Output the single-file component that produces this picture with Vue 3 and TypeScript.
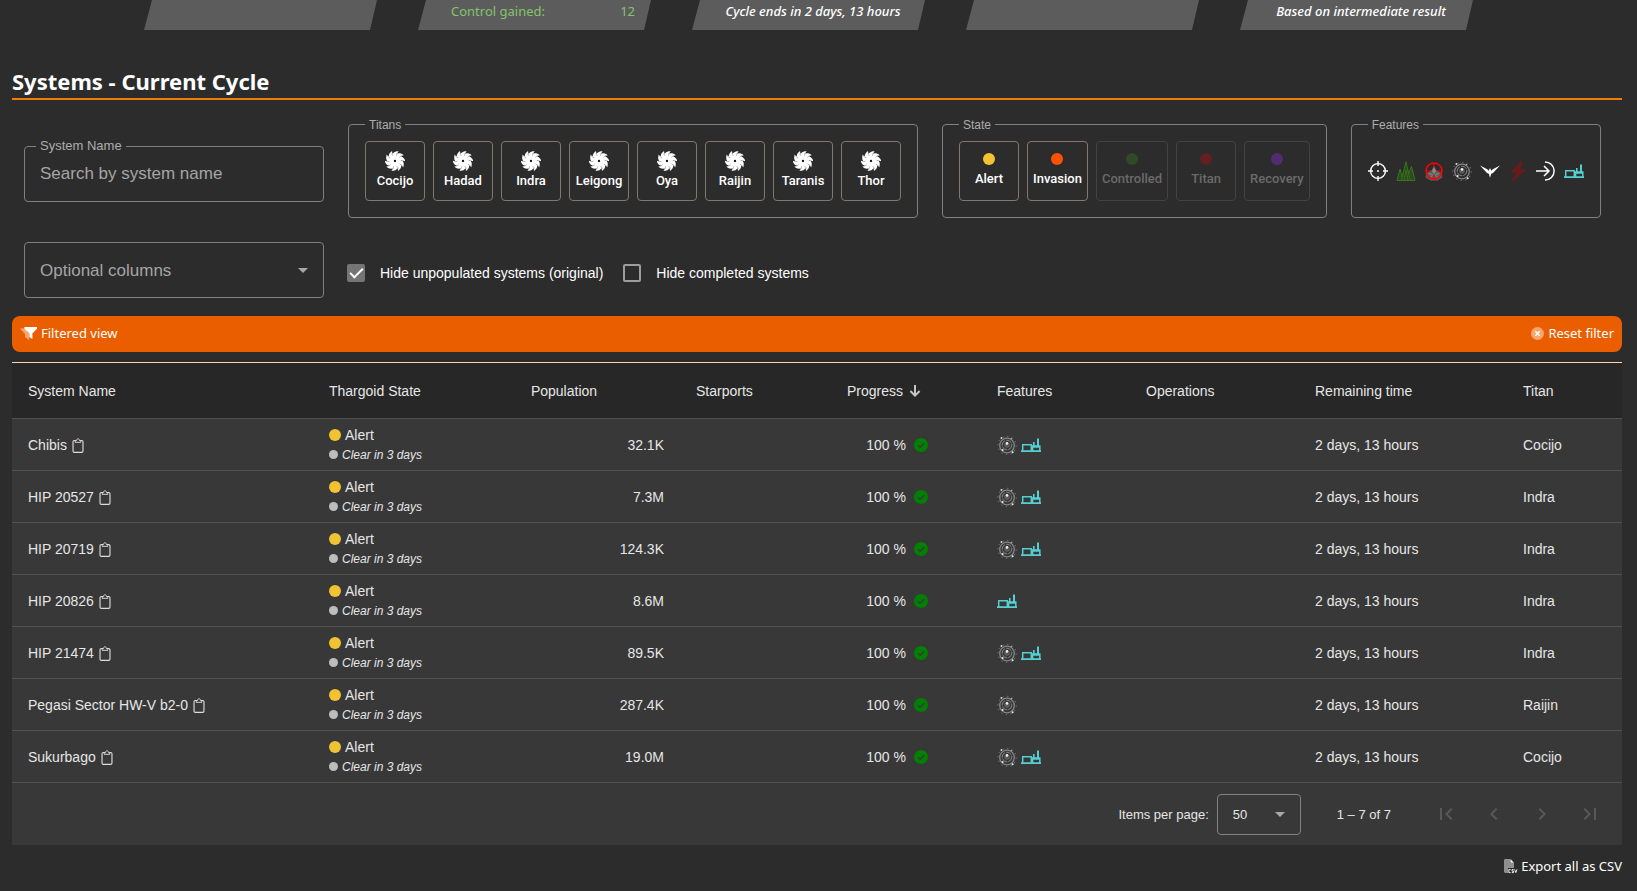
<script setup lang="ts">
import { ref } from 'vue'

interface Toggle {
  name: string
  active: boolean
  color?: string
}

interface Feature {
  id: string
  label: string
  active: boolean
}

interface SystemRow {
  name: string
  population: string
  features: string[]
  titan: string
}

const search = ref('')
const hideUnpopulated = ref(true)
const hideCompleted = ref(false)
const pageSize = ref(50)
const optionalColumn = ref('')

const titans = ref<Toggle[]>(
  ['Cocijo', 'Hadad', 'Indra', 'Leigong', 'Oya', 'Raijin', 'Taranis', 'Thor'].map((name) => ({ name, active: true })),
)

const states = ref<Toggle[]>([
  { name: 'Alert', active: true, color: '#f1c232' },
  { name: 'Invasion', active: true, color: '#ff5200' },
  { name: 'Controlled', active: false, color: '#38761d' },
  { name: 'Titan', active: false, color: '#b80c0c' },
  { name: 'Recovery', active: false, color: '#8e2bdc' },
])

const features = ref<Feature[]>([
  { id: 'target', label: 'Ground port attack', active: true },
  { id: 'spikes', label: 'Barnacle matrix', active: false },
  { id: 'spire', label: 'Thargoid spires', active: true },
  { id: 'ring', label: 'Asteroid belt', active: true },
  { id: 'wings', label: 'Federal faction', active: true },
  { id: 'bolt', label: 'Counterstrike', active: false },
  { id: 'arrow', label: 'Reactivation', active: true },
  { id: 'port', label: 'Odyssey settlements', active: true },
])

const systems: SystemRow[] = [
  { name: 'Chibis', population: '32.1K', features: ['ring', 'port'], titan: 'Cocijo' },
  { name: 'HIP 20527', population: '7.3M', features: ['ring', 'port'], titan: 'Indra' },
  { name: 'HIP 20719', population: '124.3K', features: ['ring', 'port'], titan: 'Indra' },
  { name: 'HIP 20826', population: '8.6M', features: ['port'], titan: 'Indra' },
  { name: 'HIP 21474', population: '89.5K', features: ['ring', 'port'], titan: 'Indra' },
  { name: 'Pegasi Sector HW-V b2-0', population: '287.4K', features: ['ring'], titan: 'Raijin' },
  { name: 'Sukurbago', population: '19.0M', features: ['ring', 'port'], titan: 'Cocijo' },
]

const blades = [0, 36, 72, 108, 144, 180, 216, 252, 288, 324]

const pagerButtons = [
  { label: 'First page', path: 'M18.41 16.59L13.82 12l4.59-4.59L17 6l-6 6 6 6zM6 6h2v12H6z' },
  { label: 'Previous page', path: 'M15.41 7.41L14 6l-6 6 6 6 1.41-1.41L10.83 12z' },
  { label: 'Next page', path: 'M10 6L8.59 7.41 13.17 12l-4.58 4.59L10 18l6-6z' },
  { label: 'Last page', path: 'M5.59 7.41L10.18 12l-4.59 4.59L7 18l6-6-6-6zM16 6h2v12h-2z' },
]
</script>

<template>
  <svg class="sprite" aria-hidden="true">
    <symbol id="titan" viewBox="-12 -12 24 24">
      <circle r="8.6" fill="currentColor" />
      <path
        v-for="angle in blades"
        :key="angle"
        :transform="`rotate(${angle})`"
        d="M-4 -5 C-4 -9 -1 -12 4.4 -11.8 C3 -10.6 2.6 -9.4 3.2 -6 Z"
        fill="currentColor"
      />
      <path
        v-for="angle in blades"
        :key="'l' + angle"
        :transform="`rotate(${angle})`"
        d="M1.8 -6.6 C1.6 -7.8 2 -9 2.8 -10"
        fill="none"
        stroke="#2c2c2c"
        stroke-width="0.4"
      />
      <circle r="1.4" fill="#111" />
    </symbol>
    <symbol id="target" viewBox="0 0 20 20">
      <circle cx="10" cy="10" r="7.4" fill="none" stroke="#fff" stroke-width="1.4" />
      <path d="M10 0v5M10 15v5M0 10h5M15 10h5" stroke="#fff" stroke-width="1.4" />
      <circle cx="10" cy="10" r="1" fill="#fff" />
    </symbol>
    <symbol id="spikes" viewBox="0 0 20 20">
      <path d="M1 19.5L4 8l2.2 8L10 .8l2.6 12L15.5 5.5 19 19.5z" fill="#2c4a1f" stroke="#38761d" stroke-width="1" />
      <path d="M6.2 16L5.4 19.5M12.6 12.8l2 6.7M8 19l2-10 2 10" fill="none" stroke="#38761d" stroke-width="0.8" />
    </symbol>
    <symbol id="spire" viewBox="0 0 20 20">
      <path d="M10 5l2.6 4.5 5 2.5.8 4.4-4.9 3.2h-7L1.6 16.4l.8-4.4 5-2.5z" fill="#5e5e5e" />
      <circle cx="10" cy="10" r="8" fill="none" stroke="#f00" stroke-width="1.5" />
      <path d="M10 2v6M2 10h5M13 10h5M10 14v4" stroke="#f00" stroke-width="1.1" />
      <path d="M10 6l2 4-2 3-2-3z" fill="#8a8a8a" />
      <path d="M5 12.5l3.4 1M15 12.5l-3.4 1M6.6 16l2-1.6M13.4 16l-2-1.6" stroke="#8f8f8f" stroke-width="0.9" />
    </symbol>
    <symbol id="ring" viewBox="0 0 20 20">
      <circle cx="10" cy="10.5" r="7.3" fill="none" stroke="#858585" stroke-width="1.3" />
      <circle cx="10" cy="10.5" r="9.2" fill="none" stroke="#8e8e8e" stroke-width="0.9" stroke-dasharray="1.2 3.6" />
      <circle cx="10" cy="10" r="4.8" fill="none" stroke="#848484" stroke-width="1" stroke-dasharray="6 1" />
      <circle cx="10" cy="10" r="2.8" fill="#5c5c5c" />
      <circle cx="10" cy="8.4" r="1.3" fill="#eee" />
      <circle cx="4.4" cy="3" r="0.9" fill="#ddd" />
      <circle cx="5.6" cy="15" r="1" fill="#eee" />
      <circle cx="15.6" cy="17.2" r="1" fill="#eee" />
      <circle cx="14.4" cy="3.6" r="0.7" fill="#bbb" />
    </symbol>
    <symbol id="wings" viewBox="0 0 20 20">
      <path d="M0 4.6l7.2 3.6 1.6 1.6.8-2.2h.8l.8 2.2 1.6-1.6L20 4.6l-7 7.4-1.8.8L10 16.8l-1.2-4-1.8-.8z" fill="#fff" />
    </symbol>
    <symbol id="bolt" viewBox="0 0 20 20">
      <path d="M13 0L2.8 10.4l.2 1.4h5.2L4 19.2l1.2.8L17.4 9.6l-.2-1.4h-5L15.2.8z" fill="#661c1c" />
    </symbol>
    <symbol id="arrow" viewBox="0 0 20 20">
      <path d="M9 .9a9.1 9.1 0 1 1 0 18.2M0 10h13M8 5l5 5-5 5" fill="none" stroke="#fff" stroke-width="1.5" />
    </symbol>
    <symbol id="port" viewBox="0 0 20 20">
      <path d="M1.7 16V9.7h8.6V16M11.6 16v-5h7.2v5M11.6 12h7" fill="none" stroke="#55cfd2" stroke-width="1.5" />
      <path d="M16 3.4h2V11h-2zM12 7h1.6v4H12zM0 15.2h20V17H0z" fill="#55cfd2" />
    </symbol>
    <symbol id="clipboard" viewBox="0 0 12 16">
      <rect x="0.7" y="2.7" width="10.6" height="12.6" rx="1.4" fill="none" stroke="#ddd" stroke-width="1.2" />
      <path d="M3 4.6V2.8h1.2C4.6.2 7.4.2 7.8 2.8H9v1.8z" fill="#383838" stroke="#ddd" stroke-width="1" />
    </symbol>
  </svg>

  <main class="page">
    <section class="banner">
      <div class="card" />
      <div class="card split"><span>Control gained:</span><span>12</span></div>
      <div class="card note">Cycle ends in 2 days, 13 hours</div>
      <div class="card" />
      <div class="card note">Based on intermediate result</div>
    </section>

    <h2 class="title">Systems - Current Cycle</h2>

    <form class="filters" @submit.prevent>
      <div class="row">
        <div class="field">
          <label for="system-name">System Name</label>
          <input id="system-name" v-model="search" type="text" placeholder="Search by system name" />
        </div>
        <fieldset class="group">
          <legend>Titans</legend>
          <div class="options">
            <button
              v-for="titan in titans"
              :key="titan.name"
              type="button"
              class="toggle"
              :class="{ off: !titan.active }"
              :aria-pressed="titan.active"
              @click="titan.active = !titan.active"
            >
              <svg class="titan-icon"><use href="#titan" /></svg>
              <span>{{ titan.name }}</span>
            </button>
          </div>
        </fieldset>
        <fieldset class="group">
          <legend>State</legend>
          <div class="options">
            <button
              v-for="state in states"
              :key="state.name"
              type="button"
              class="toggle state"
              :class="{ off: !state.active }"
              :aria-pressed="state.active"
              @click="state.active = !state.active"
            >
              <i class="dot" :style="{ background: state.color }" />
              <span>{{ state.name }}</span>
            </button>
          </div>
        </fieldset>
        <fieldset class="group">
          <legend>Features</legend>
          <div class="options">
            <button
              v-for="feature in features"
              :key="feature.id"
              type="button"
              :aria-label="feature.label"
              :aria-pressed="feature.active"
              @click="feature.active = !feature.active"
            >
              <svg class="feature"><use :href="'#' + feature.id" /></svg>
            </button>
          </div>
        </fieldset>
      </div>

      <div class="row second">
        <div class="field select-field">
          <select v-model="optionalColumn" aria-label="Optional columns">
            <option value="">Optional columns</option>
            <option value="factions">Factions</option>
          </select>
          <svg class="caret" viewBox="0 0 10 5"><path d="M0 0l5 5 5-5z" /></svg>
        </div>
        <div class="checks">
          <label class="check"><input v-model="hideUnpopulated" type="checkbox" />Hide unpopulated systems (original)</label>
          <label class="check"><input v-model="hideCompleted" type="checkbox" />Hide completed systems</label>
        </div>
      </div>
    </form>

    <div class="filter-bar">
      <span class="bar-item">
        <svg class="funnel" viewBox="0 0 17 13">
          <path d="M0 1.6h5.2l4 5.4v6L5 10V7z" fill="#f7a670" />
          <path d="M4.4 0H17v1.8l-4.6 4.8V12l-3-2V6.6L4.4 1.8z" fill="#fff" />
        </svg>
        Filtered view
      </span>
      <button type="button" class="bar-item">
        <svg class="reset" viewBox="0 0 12 12">
          <circle cx="6" cy="6" r="6" fill="#f7a670" />
          <path d="M4 4l4 4M8 4l-4 4" stroke="#fff" stroke-width="1.2" />
        </svg>
        Reset filter
      </button>
    </div>

    <div class="table-box">
      <table>
        <colgroup>
          <col class="c-name" /><col class="c-state" /><col class="c-pop" /><col class="c-ports" /><col class="c-progress" />
          <col class="c-features" /><col class="c-ops" /><col class="c-time" /><col class="c-titan" />
        </colgroup>
        <thead>
          <tr>
            <th>System Name</th>
            <th>Thargoid State</th>
            <th class="center">Population</th>
            <th class="center">Starports</th>
            <th class="progress">
              <span class="sorted">
                Progress
                <svg viewBox="0 0 12 12"><path d="M6 0v10.5M1.4 6L6 10.6 10.6 6" fill="none" stroke="#c4c4c4" stroke-width="2" /></svg>
              </span>
            </th>
            <th>Features</th>
            <th>Operations</th>
            <th>Remaining time</th>
            <th>Titan</th>
          </tr>
        </thead>
        <tbody>
          <tr v-for="system in systems" :key="system.name">
            <td>
              <span class="name">
                {{ system.name }}
                <button type="button" class="copy" :aria-label="'Copy ' + system.name">
                  <svg><use href="#clipboard" /></svg>
                </button>
              </span>
            </td>
            <td>
              <div class="alert"><i class="dot yellow" />Alert</div>
              <div class="clear"><i class="dot small" />Clear in 3 days</div>
            </td>
            <td class="right">{{ system.population }}</td>
            <td />
            <td class="progress">
              <span class="done">
                100 %
                <svg viewBox="0 0 14 14">
                  <circle cx="7" cy="7" r="7" fill="#008000" />
                  <path d="M4.2 7.2l2 2 3.8-4" fill="none" stroke="#383838" stroke-width="1.4" />
                </svg>
              </span>
            </td>
            <td>
              <span class="feature-list">
                <svg v-for="id in system.features" :key="id" class="feature"><use :href="'#' + id" /></svg>
              </span>
            </td>
            <td />
            <td>2 days, 13 hours</td>
            <td>{{ system.titan }}</td>
          </tr>
        </tbody>
      </table>
      <div class="paginator">
        <label for="page-size">Items per page:</label>
        <div class="page-size">
          <select id="page-size" v-model="pageSize">
            <option :value="50">50</option>
            <option :value="100">100</option>
          </select>
          <svg class="caret" viewBox="0 0 10 5"><path d="M0 0l5 5 5-5z" /></svg>
        </div>
        <span class="range">1 – 7 of 7</span>
        <div class="pager">
          <button v-for="item in pagerButtons" :key="item.label" type="button" disabled :aria-label="item.label">
            <svg viewBox="0 0 24 24"><path :d="item.path" /></svg>
          </button>
        </div>
      </div>
    </div>

    <div class="export">
      <button type="button">
        <svg viewBox="0 0 14 15">
          <path d="M0 1.4Q0 0 1.4 0H6v4h4v5H4v5H1.4Q0 14 0 12.6z" fill="#8f8f8f" />
          <path d="M6.4 0L10 3.8H6.4z" fill="#fff" />
          <path d="M6.6 10.6H4.8v3h1.8M9.6 10.6H8v1.5h1.5v1.5H7.8M10.6 10.4l1.2 3.2 1.2-3.2" fill="none" stroke="#fff" stroke-width="0.9" />
        </svg>
        Export all as CSV
      </button>
    </div>
  </main>
</template>

<style>
body {
  margin: 0;
  background: #2c2c2c;
}
</style>

<style scoped>
.sprite {
  position: absolute;
  width: 0;
  height: 0;
}
.page {
  padding: 0 15px 0 12px;
  color: #fff;
  font-family: "Noto Sans", "Liberation Sans", sans-serif;
  font-size: 13px;
}
button,
input,
select {
  font: inherit;
  color: inherit;
}
button {
  margin: 0;
  padding: 0;
  border: 0;
  background: none;
  cursor: pointer;
}
svg {
  display: block;
  flex: none;
}
.banner {
  display: flex;
  justify-content: center;
  gap: 24px;
}
.card {
  box-sizing: border-box;
  width: 250px;
  height: 30px;
  padding: 1px 33px 0;
  background: #5c5c5c;
  clip-path: polygon(8px 0, 233px 0, 226px 100%, 0 100%);
  line-height: 20px;
}
.split {
  display: flex;
  justify-content: space-between;
  color: #86c36e;
}
.note {
  padding: 1px 8px 0 0;
  text-align: center;
  font-style: italic;
  font-weight: 500;
  white-space: nowrap;
}
.title {
  margin: 36px 0 0;
  padding-bottom: 2px;
  border-bottom: 2px solid #f07c00;
  font-size: 22px;
  line-height: 30px;
  font-weight: 700;
}
.filters {
  padding: 0 12px;
  font-family: "Liberation Sans", sans-serif;
}
.row {
  display: flex;
  gap: 24px;
  align-items: flex-start;
  margin-top: 18px;
}
.field {
  position: relative;
  width: 300px;
  margin-top: 28px;
}
.field input,
.field select {
  display: block;
  box-sizing: border-box;
  width: 100%;
  height: 56px;
  padding: 0 15px;
  border: 1px solid #808080;
  border-radius: 4px;
  background: transparent;
  outline: none;
  appearance: none;
  color: #a5a5a5;
  font-size: 17px;
}
.field input::placeholder {
  color: #a5a5a5;
  opacity: 1;
}
.field label {
  position: absolute;
  top: -8px;
  left: 12px;
  padding: 0 4px;
  background: #2c2c2c;
  color: #adadad;
  font-size: 13px;
  line-height: 16px;
}
.caret {
  position: absolute;
  top: 50%;
  right: 16px;
  width: 10px;
  height: 5px;
  margin-top: -2px;
  fill: #a8a8a8;
  pointer-events: none;
}
.group {
  position: relative;
  margin: 6px 0 0;
  padding: 16px;
  border: 1px solid #808080;
  border-radius: 4px;
  min-width: 0;
}
.group legend {
  position: absolute;
  top: -8px;
  left: 16px;
  padding: 0 4px;
  background: #2c2c2c;
  color: #adadad;
  font-size: 12px;
  line-height: 16px;
}
.options {
  display: flex;
  align-items: center;
  gap: 8px;
  height: 60px;
}
.toggle {
  display: flex;
  flex-direction: column;
  align-items: center;
  box-sizing: border-box;
  min-width: 60px;
  height: 60px;
  padding: 9px 4px 0;
  border: 1px solid #81786f;
  border-radius: 4px;
  font-family: Roboto, "Liberation Sans", sans-serif;
  font-size: 13px;
  font-weight: 500;
  line-height: 20px;
}
.titan-icon {
  width: 20px;
  height: 20px;
}
.state {
  gap: 4px;
  padding: 11px 5px 0;
}
.dot {
  display: block;
  flex: none;
  width: 12px;
  height: 12px;
  border-radius: 50%;
}
.off {
  border-color: #454341;
  color: #6a6a6a;
}
.off .dot {
  opacity: 0.4;
}
.feature {
  width: 20px;
  height: 20px;
}
.second {
  margin-top: 24px;
  align-items: center;
}
.select-field {
  margin-top: 0;
}
.checks {
  display: flex;
  gap: 20px;
  margin: 6px 0 0 -1px;
}
.check {
  display: flex;
  align-items: center;
  gap: 15px;
  font-size: 14px;
  line-height: 20px;
}
.check input {
  display: grid;
  place-items: center;
  box-sizing: border-box;
  width: 18px;
  height: 18px;
  margin: 0;
  border: 2px solid #9d9d9d;
  border-radius: 2px;
  appearance: none;
}
.check input:checked {
  border-color: #757575;
  background: #757575;
}
.check input:checked::before {
  content: "";
  width: 11px;
  height: 5px;
  margin-top: -3px;
  border: solid #fff;
  border-width: 0 0 2px 2px;
  box-sizing: content-box;
  transform: rotate(-45deg);
}
.filter-bar {
  display: flex;
  justify-content: space-between;
  align-items: center;
  box-sizing: border-box;
  height: 36px;
  margin-top: 18px;
  padding: 0 8px 2px;
  border-radius: 8px;
  background: #ea5e00;
}
.bar-item {
  display: flex;
  align-items: center;
  gap: 4px;
  line-height: 20px;
}
.funnel {
  width: 17px;
  height: 13px;
}
.reset {
  width: 13px;
  height: 13px;
}
.table-box {
  margin-top: 10px;
  border-top: 1px solid #ffd2ac;
  background: #383838;
  color: #e6e6e6;
  font-family: "Liberation Sans", sans-serif;
}
table {
  width: 100%;
  table-layout: fixed;
  border-spacing: 0;
  font-size: 14px;
  line-height: 20px;
}
.c-name { width: 301px; }
.c-state { width: 135px; }
.c-pop { width: 232px; }
.c-ports { width: 87px; }
.c-progress { width: 214px; }
.c-features { width: 149px; }
.c-ops { width: 169px; }
.c-time { width: 208px; }
.c-titan { width: 115px; }
th,
td {
  box-sizing: border-box;
  padding: 0 16px;
  border-bottom: 1px solid #515151;
  text-align: left;
  font-weight: 400;
  white-space: nowrap;
}
th {
  height: 56px;
  background: #272727;
}
td {
  height: 52px;
}
th.center {
  text-align: center;
}
td.right {
  text-align: right;
}
.name,
.sorted,
.done,
.feature-list {
  display: inline-flex;
  align-items: center;
  gap: 4px;
  vertical-align: middle;
}
.name {
  gap: 5px;
}
.copy svg {
  width: 12px;
  height: 15px;
}
th.progress,
td.progress {
  padding-right: 53px;
  text-align: right;
}
.sorted {
  gap: 6px;
  padding-right: 7px;
}
.sorted svg {
  width: 12px;
  height: 12px;
}
.done {
  gap: 8px;
}
.done svg {
  width: 14px;
  height: 14px;
}
.alert,
.clear {
  display: flex;
  align-items: center;
  gap: 4px;
}
.clear {
  font-size: 12px;
  font-style: italic;
}
.yellow {
  background: #f1c232;
}
.small {
  width: 9px;
  height: 9px;
  background: #bdbdbd;
}
.paginator {
  display: flex;
  justify-content: flex-end;
  align-items: center;
  height: 62px;
  padding-right: 8px;
  font-size: 13px;
}
.page-size {
  position: relative;
  margin-left: 8px;
}
.page-size select {
  display: block;
  box-sizing: border-box;
  width: 84px;
  height: 41px;
  padding: 0 15px;
  border: 1px solid #828282;
  border-radius: 4px;
  background: transparent;
  appearance: none;
}
.range {
  margin: 0 31px 0 36px;
}
.pager {
  display: flex;
}
.pager button {
  display: grid;
  place-items: center;
  width: 48px;
  height: 48px;
}
.pager svg {
  width: 24px;
  height: 24px;
  fill: #585858;
}
.export {
  display: flex;
  justify-content: flex-end;
  margin-top: 11px;
}
.export button {
  display: flex;
  align-items: center;
  gap: 3px;
  line-height: 20px;
}
.export svg {
  width: 14px;
  height: 15px;
}
</style>
